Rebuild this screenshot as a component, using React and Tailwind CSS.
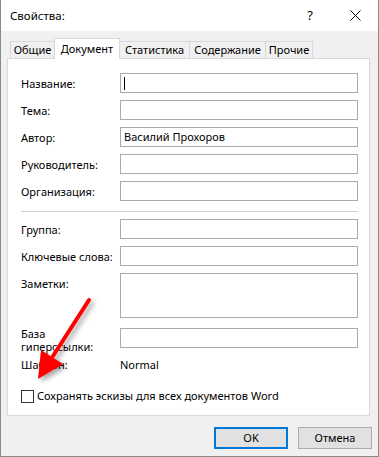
import React from 'react';

const font = { fontFamily: '"Noto Sans", "Liberation Sans", sans-serif' };

// tab widths taken so the borders land where the dialog has them
const tabs = [
  { name: 'Общие', w: 'w-[45px]' },
  { name: 'Документ', w: 'w-[66px]', active: true },
  { name: 'Статистика', w: 'w-[71px]' },
  { name: 'Содержание', w: 'w-[77px]' },
  { name: 'Прочие', w: 'w-[48px]' },
];

function Field({ label, value, cursor, tall }) {
  return (
    <div className={`flex ${tall ? 'items-start' : 'items-center'}`}>
      <div className={`w-[99px] shrink-0 leading-[15px] ${tall ? 'pt-[3px]' : ''}`}>{label}</div>
      <div
        className={`w-[238px] ${tall ? 'h-[45px]' : 'h-[20px]'} border border-[#ababab] bg-white flex items-center px-[3px]`}
      >
        {cursor && <span className="block w-px h-[13px] bg-black" />}
        {value && <span>{value}</span>}
      </div>
    </div>
  );
}

function Arrow() {
  return (
    <svg className="absolute left-0 top-0 pointer-events-none" width="379" height="457">
      <defs>
        <filter id="sh" x="-50%" y="-50%" width="200%" height="200%">
          <feGaussianBlur in="SourceAlpha" stdDeviation="2.5" />
          <feOffset dx="3" dy="3" result="b" />
          <feComponentTransfer>
            <feFuncA type="linear" slope="0.35" />
          </feComponentTransfer>
          <feMerge>
            <feMergeNode />
            <feMergeNode in="SourceGraphic" />
          </feMerge>
        </filter>
      </defs>
      <g filter="url(#sh)">
        <line x1="88" y1="300" x2="52" y2="356" stroke="#ff0000" strokeWidth="4" strokeLinecap="round" />
        <polygon points="37,379 40,350 62,364" fill="#ff0000" />
      </g>
    </svg>
  );
}

export default function App() {
  return (
    <div
      className="relative w-[379px] h-[457px] bg-[#f0f0f0] border-x border-b border-[#8a8a8a] text-[11px] text-black flex flex-col"
      style={font}
    >
      {/* title bar */}
      <div className="h-[31px] bg-white flex items-center pl-[9px] pr-[17px]">
        <span className="text-[11.5px]">Свойства:</span>
        <span className="ml-auto mr-[37px] text-[13px]">?</span>
        <svg width="11" height="11" viewBox="0 0 11 11">
          <path d="M0.5 0.5 L10.5 10.5 M10.5 0.5 L0.5 10.5" stroke="#000" strokeWidth="1" />
        </svg>
      </div>

      {/* tabs */}
      <div className="mt-[7px] h-[20px] flex items-end pl-[9px] relative z-10">
        {tabs.map((t, i) => (
          <div
            key={t.name}
            className={`${t.w} ${i > 0 ? '-ml-px' : ''} ${
              t.active ? 'h-[21px] -mb-px bg-white relative z-10' : 'h-[17px] bg-[#f0f0f0]'
            } border-x border-t border-[#d9d9d9] flex items-center justify-center`}
          >
            {t.name}
          </div>
        ))}
      </div>

      {/* panel */}
      <div className="ml-[6px] w-[363px] h-[358px] bg-white border border-[#d9d9d9] pl-[13px] pt-[14px] flex flex-col">
        <div className="flex flex-col gap-[7px]">
          <Field label="Название:" cursor />
          <Field label="Тема:" />
          <Field label="Автор:" value="Василий Прохоров" />
          <Field label="Руководитель:" />
          <Field label="Организация:" />
        </div>
        <div className="mt-[10px] mb-[7px] w-[337px] h-px bg-[#d0d0d0]" />
        <div className="flex flex-col gap-[7px]">
          <Field label="Группа:" />
          <Field label="Ключевые слова:" />
          <Field label="Заметки:" tall />
        </div>
        <div className="mt-[10px] h-[20px] flex items-center">
          <div className="w-[99px] shrink-0 leading-[13px] mt-[3px]">
            База
            <br />
            гиперссылки:
          </div>
          <div className="w-[238px] h-[20px] border border-[#ababab] bg-white" />
        </div>
        <div className="mt-[10px] flex items-center h-[15px]">
          <div className="w-[99px] shrink-0">Шаблон:</div>
          <div>Normal</div>
        </div>
        <div className="mt-[17px] flex items-center h-[13px]">
          <span className="w-[13px] h-[13px] border border-[#333] bg-white shrink-0" />
          <span className="ml-[3px]">Сохранять эскизы для всех документов Word</span>
        </div>
      </div>

      {/* buttons */}
      <div className="mt-[11px] flex pl-[213px] gap-[10px]">
        <div className="w-[74px] h-[22px] bg-[#e1e1e1] border-2 border-[#0078d7] flex items-center justify-center">
          OK
        </div>
        <div className="w-[74px] h-[22px] bg-[#e1e1e1] border border-[#adadad] flex items-center justify-center">
          Отмена
        </div>
      </div>

      <Arrow />
    </div>
  );
}
